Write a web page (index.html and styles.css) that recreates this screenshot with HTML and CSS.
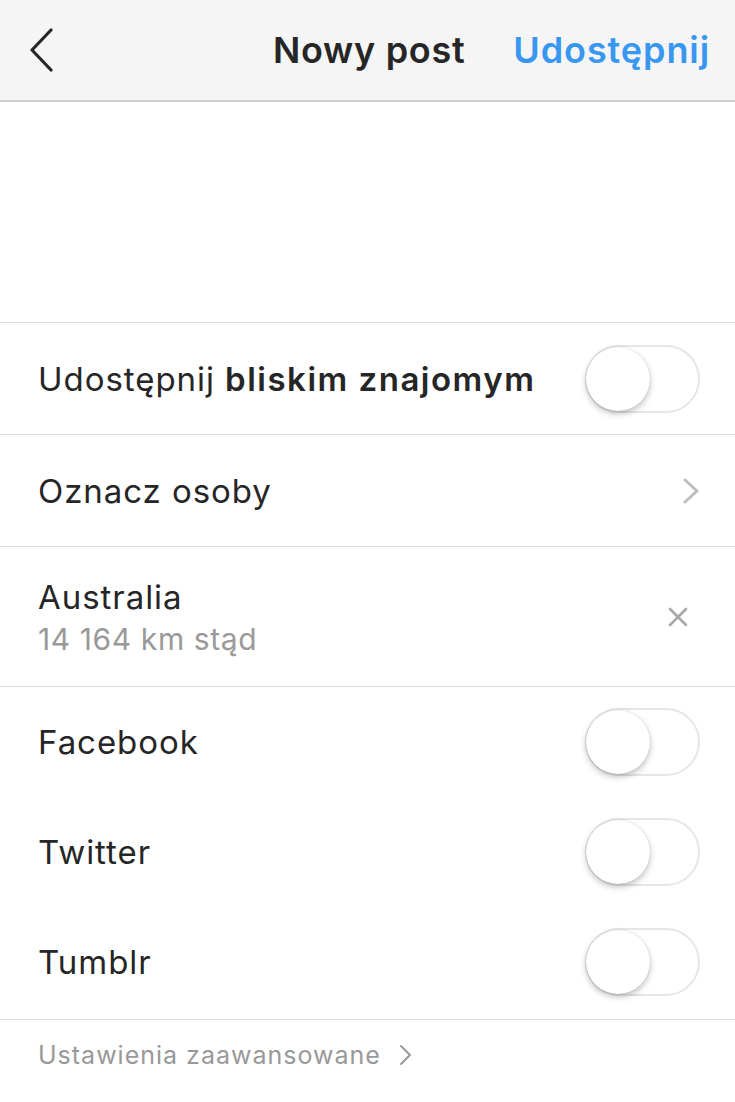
FILE: index.html
```html
<!DOCTYPE html>
<html lang="pl">
<head>
    <meta charset="UTF-8">
    <meta name="viewport" content="width=device-width, initial-scale=1.0">
    <title>Nowy post</title>
    <link rel="stylesheet" href="styles.css">
</head>
<body>
    <header class="topbar">
        <a href="#" class="back">
            <svg width="26" height="44" viewBox="0 0 26 44"><path d="M23 2 L4 22 L23 42" fill="none" stroke="#262626" stroke-width="3.2" stroke-linecap="round" stroke-linejoin="round"/></svg>
        </a>
        <h1 class="title">Nowy post</h1>
        <a href="#" class="share">Udostępnij</a>
    </header>

    <main>
        <div class="caption"></div>

        <div class="row">
            <span class="label">Udostępnij <b>bliskim znajomym</b></span>
            <span class="switch"><span class="knob"></span></span>
        </div>

        <div class="row">
            <span class="label">Oznacz osoby</span>
            <svg class="chevron" width="18" height="26" viewBox="0 0 18 26"><path d="M3 2 L15 13 L3 24" fill="none" stroke="#bdbdbd" stroke-width="3" stroke-linecap="round" stroke-linejoin="round"/></svg>
        </div>

        <div class="row row-place">
            <div>
                <div class="label">Australia</div>
                <div class="sub">14 164 km stąd</div>
            </div>
            <svg class="close" width="20" height="20" viewBox="0 0 20 20"><path d="M2 2 L18 18 M18 2 L2 18" stroke="#a8a8a8" stroke-width="2.6" stroke-linecap="round"/></svg>
        </div>

        <div class="group">
            <div class="row row-social">
                <span class="label">Facebook</span>
                <span class="switch"><span class="knob"></span></span>
            </div>
            <div class="row row-social">
                <span class="label">Twitter</span>
                <span class="switch"><span class="knob"></span></span>
            </div>
            <div class="row row-social">
                <span class="label">Tumblr</span>
                <span class="switch"><span class="knob"></span></span>
            </div>
        </div>

        <a href="#" class="advanced">Ustawienia zaawansowane
            <svg width="14" height="22" viewBox="0 0 14 22"><path d="M2 2 L11 11 L2 20" fill="none" stroke="#9a9a9a" stroke-width="2" stroke-linecap="round" stroke-linejoin="round"/></svg>
        </a>
    </main>
</body>
</html>
```

FILE: styles.css
```css
body {
    margin: 0;
    padding: 0;
    font-family: Inter, "Noto Sans", sans-serif;
    background-color: #ffffff;
    color: #262626;
}
.topbar {
    height: 102px;
    background-color: #f5f5f5;
    border-bottom: 2px solid #cfcfcf;
    display: flex;
    align-items: center;
    padding: 0 25px 0 28px;
    box-sizing: border-box;
}
.back {
    display: flex;
    width: 245px;
}
.title {
    margin: 0;
    font-size: 36px;
    font-weight: 600;
    letter-spacing: 0.7px;
    color: #262626;
    flex: 1;
}
.share {
    text-decoration: none;
    font-size: 36px;
    font-weight: 600;
    letter-spacing: 0.9px;
    color: #3897f0;
}
.caption {
    height: 220px;
    border-bottom: 1px solid #dbdbdb;
}
.row {
    height: 111px;
    display: flex;
    align-items: center;
    justify-content: space-between;
    padding: 0 35px 0 38px;
    border-bottom: 1px solid #dbdbdb;
}
.row-place {
    height: 139px;
}
.row-place .close {
    margin-right: 12px;
}
.label {
    font-size: 33px;
    color: #262626;
    letter-spacing: 0.95px;
}
.label b {
    font-weight: 600;
    letter-spacing: 1.5px;
}
.sub {
    font-size: 30px;
    color: #999999;
    letter-spacing: 0.6px;
    margin-top: 4px;
}
.group {
    padding: 0 0 2px;
    border-bottom: 1px solid #dbdbdb;
}
.row-social {
    height: 110px;
    border-bottom: none;
}
.switch {
    width: 111px;
    height: 64px;
    border: 2px solid #e6e6e6;
    border-radius: 34px;
    background: #ffffff;
    position: relative;
    flex-shrink: 0;
}
.knob {
    position: absolute;
    left: -1px;
    top: 0;
    width: 64px;
    height: 64px;
    border-radius: 50%;
    background: #ffffff;
    box-shadow: 0 3px 6px rgba(0, 0, 0, 0.25), 0 0 1px rgba(0, 0, 0, 0.2);
}
.advanced {
    display: flex;
    align-items: center;
    gap: 18px;
    padding: 20px 38px;
    text-decoration: none;
    font-size: 25px;
    letter-spacing: 1px;
    color: #999999;
}
```
